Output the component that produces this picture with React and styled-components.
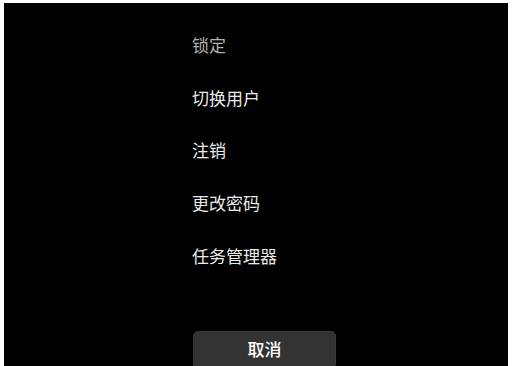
import React from "react";
import styled, { createGlobalStyle } from "styled-components";

const GlobalStyle = createGlobalStyle`
  html, body {
    margin: 0;
    padding: 0;
    background: #ffffff;
  }
  body {
    font-family: "Noto Sans CJK SC", "Noto Sans", sans-serif;
  }
`;

const Screen = styled.div`
  margin: 3px 4px 0 4px;
  height: 363px;
  background: #000000;
  overflow: hidden;
  display: flex;
  flex-direction: column;
  padding: 15px 0 0 188px;
  box-sizing: border-box;
`;

const Menu = styled.ul`
  list-style: none;
  margin: 0;
  padding: 0;
  display: flex;
  flex-direction: column;
`;

const Item = styled.li`
  height: 52.75px;
  display: flex;
  align-items: center;
  font-size: 17px;
  color: ${(p) => (p.$dim ? "#b0b0b0" : "#ebebeb")};
`;

const CancelButton = styled.button`
  margin-top: 49px;
  margin-left: 1px;
  width: 143px;
  height: 38px;
  flex-shrink: 0;
  background: #333333;
  border: 1px solid #3c3c3c;
  border-radius: 5px;
  color: #ffffff;
  font-family: inherit;
  font-size: 17px;
  font-weight: 500;
  padding: 0 0 2px 0;
  display: flex;
  align-items: center;
  justify-content: center;
  box-sizing: border-box;
`;

const items = ["锁定", "切换用户", "注销", "更改密码", "任务管理器"];

export default function App() {
  return (
    <>
      <GlobalStyle />
      <Screen>
        <Menu>
          {items.map((label, i) => (
            <Item key={label} $dim={i === 0}>
              {label}
            </Item>
          ))}
        </Menu>
        <CancelButton>取消</CancelButton>
      </Screen>
    </>
  );
}
